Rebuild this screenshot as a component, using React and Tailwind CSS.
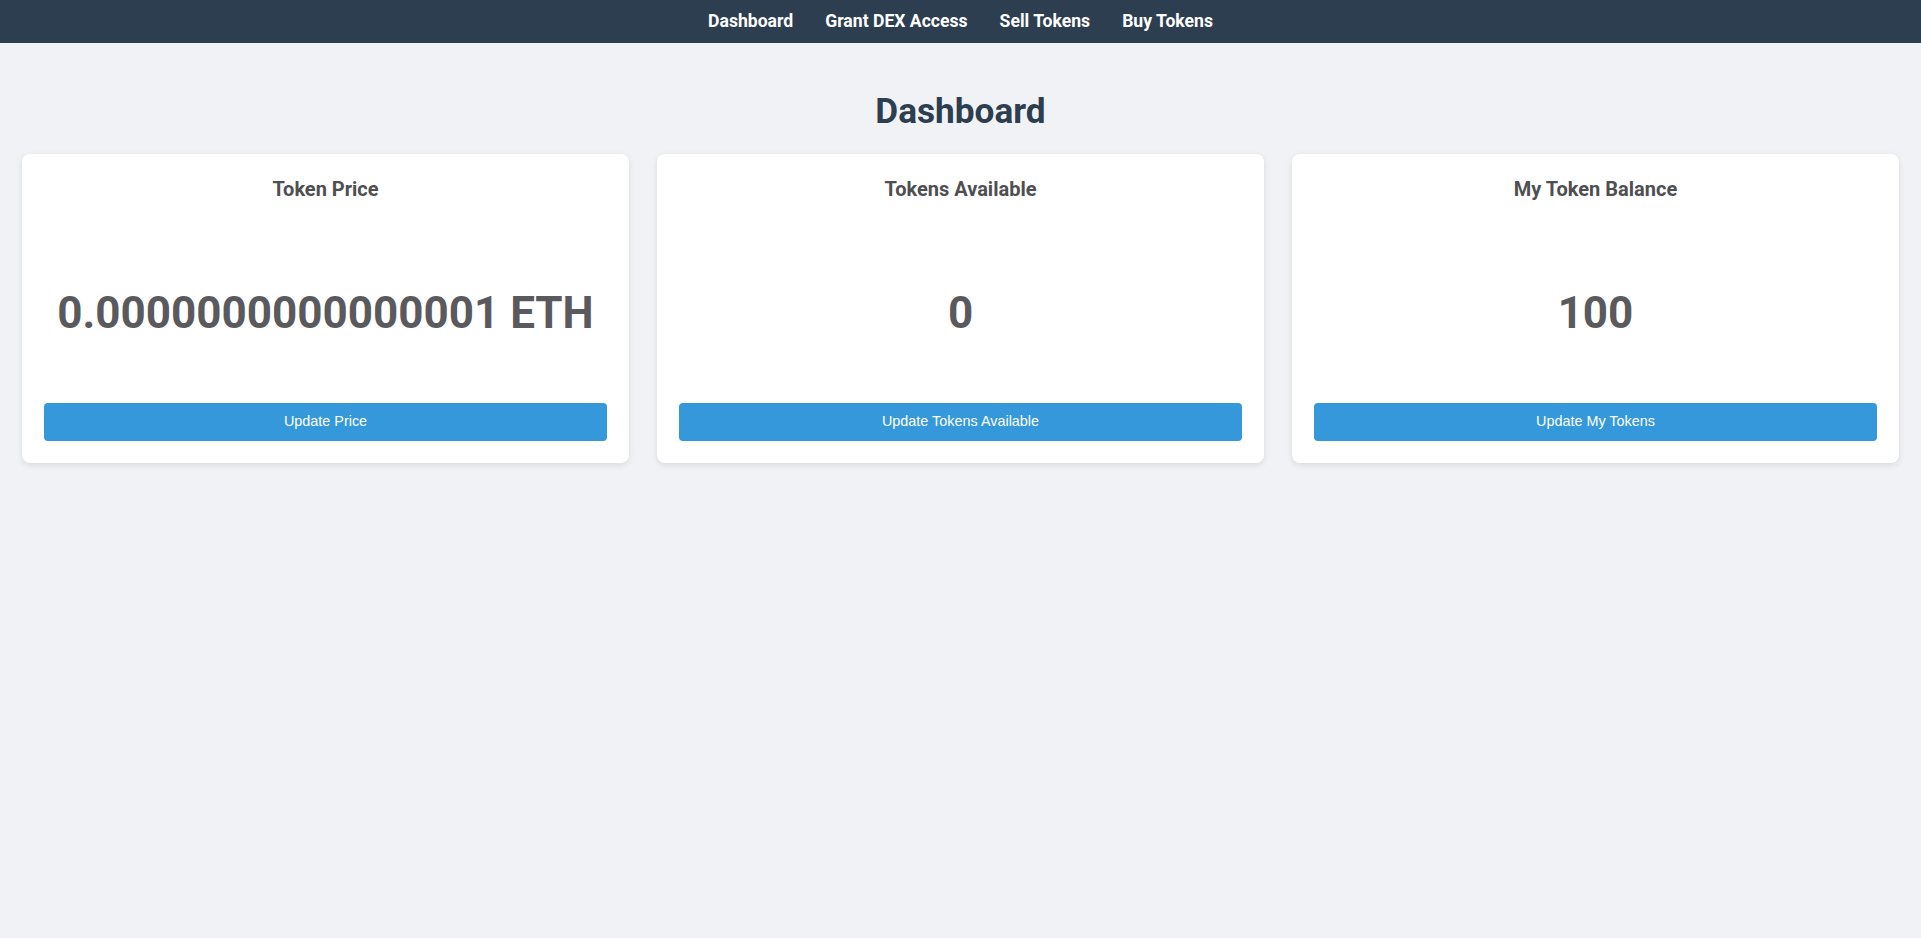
const navLinks = ['Dashboard', 'Grant DEX Access', 'Sell Tokens', 'Buy Tokens'];

const cards = [
  { title: 'Token Price', value: '0.0000000000000001 ETH', action: 'Update Price' },
  { title: 'Tokens Available', value: '0', action: 'Update Tokens Available' },
  { title: 'My Token Balance', value: '100', action: 'Update My Tokens' },
];

function StatCard({ title, value, action }) {
  return (
    <div className="bg-white rounded-lg shadow-[0_2px_6px_rgba(0,0,0,0.1)] pt-[23px] px-[22px] pb-[22px] flex flex-col">
      <h3 className="text-center text-[20px] leading-[24px] font-bold text-[#4f4f52]">{title}</h3>
      <div className="mt-[90px] text-center text-[44px] leading-[44px] font-bold text-[#5a5a5e] whitespace-nowrap">
        {value}
      </div>
      <button
        type="button"
        className="mt-[68px] h-[38px] w-full rounded bg-[#3498db] text-white text-[14.4px] font-['Liberation_Sans',Arial,sans-serif] hover:bg-[#2980b9] transition-colors"
      >
        {action}
      </button>
    </div>
  );
}

export default function App() {
  return (
    <div className="min-h-[938px] bg-[#f0f2f5] font-['Roboto',sans-serif]">
      <nav className="h-[43px] bg-[#2c3e50] flex items-center justify-center">
        <ul className="flex items-center">
          {navLinks.map((link) => (
            <li key={link}>
              <a href="#" className="mx-4 text-white font-bold text-[17.6px] leading-[43px] block">
                {link}
              </a>
            </li>
          ))}
        </ul>
      </nav>

      <main className="px-[22px]">
        <h1 className="mt-[47px] text-center text-[35.2px] leading-[42px] font-bold text-[#2c3e50]">Dashboard</h1>
        <div className="mt-[22px] grid grid-cols-3 gap-[28px]">
          {cards.map((card) => (
            <StatCard key={card.title} {...card} />
          ))}
        </div>
      </main>
    </div>
  );
}
